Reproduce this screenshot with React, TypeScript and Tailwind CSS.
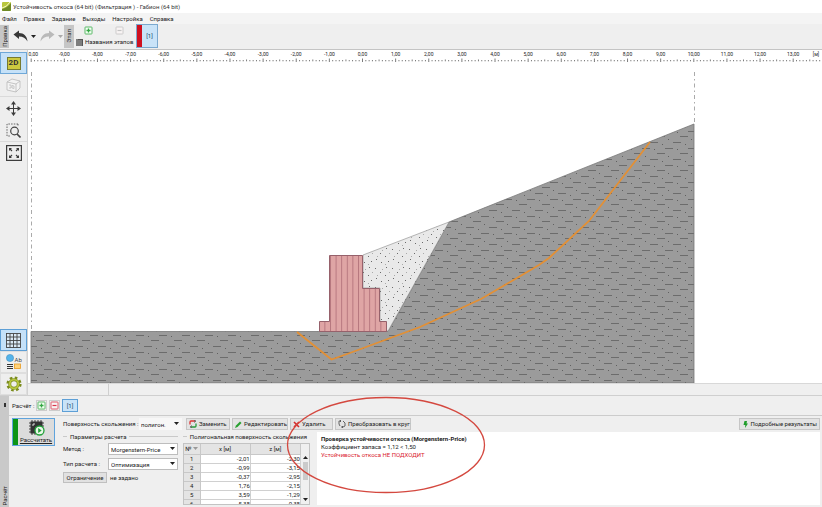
import React, { useState } from "react";

const menus = ["Файл", "Правка", "Задание", "Выходы", "Настройка", "Справка"];

const points = [
  ["1", "-2,01", "-2,30"],
  ["2", "-0,99", "-3,15"],
  ["3", "-0,37", "-2,95"],
  ["4", "1,76", "-2,15"],
  ["5", "3,59", "-1,29"],
  ["6", "5,38", "-0,38"],
];

const METRE = 33.13;
const ORIGIN = 362.5;

function Plus({ color = "#35a845" }: { color?: string }) {
  return (
    <svg className="size-[9px]" viewBox="0 0 9 9" fill="none" stroke={color}>
      <rect x="1" y="1" width="7" height="7" rx="0.6" strokeWidth="0.8" fill="#f4fff4" />
      <path d="M4.5 2.5v4M2.5 4.5h4" strokeWidth="1.3" />
    </svg>
  );
}

function Minus({ color }: { color: string }) {
  return (
    <svg className="size-[9px]" viewBox="0 0 9 9" fill="none" stroke={color}>
      <rect x="1" y="1" width="7" height="7" rx="0.6" strokeWidth="0.8" fill="#f8f4f4" />
      <path d="M2.5 4.5h4" strokeWidth="1.2" />
    </svg>
  );
}

function Arrow({ color, flip }: { color: string; flip?: boolean }) {
  return (
    <svg className={flip ? "h-[12px] w-[15px] -scale-x-100" : "h-[12px] w-[15px]"} viewBox="0 0 15 12">
      <path d="M0.5 4.5 6 0.5V3c5 0 8 3 8.500 8.500C12.500 8 10 6.500 6 6.500V9Z" fill={color} />
    </svg>
  );
}

function Caret({ color = "#222" }: { color?: string }) {
  return (
    <svg className="h-[3px] w-[5px]" viewBox="0 0 5 3">
      <path d="M0 0h5L2.500 3Z" fill={color} />
    </svg>
  );
}

function TitleBar() {
  return (
    <header className="flex h-[13px] shrink-0 items-center gap-[2px] bg-white pl-[2px]">
      <svg className="size-[9px]" viewBox="0 0 9 9">
        <rect width="9" height="9" rx="1" fill="#b9c63c" />
        <path d="M0 7Q5 6 9 1v7q0 1-1 1H1Q0 9 0 8Z" fill="#6f8a25" />
        <path d="M0 6Q5 5 8 0" stroke="#f3f6c8" fill="none" />
      </svg>
      <h1 className="text-[#333]">Устойчивость откоса (64 bit) (Фильтрация ) - Габион (64 bit)</h1>
    </header>
  );
}

function Toolbar() {
  return (
    <div className="flex h-[26px] shrink-0 items-center border-b border-[#c4c4c4] pb-px">
      <div className="flex h-[23px] w-[9px] items-center justify-center bg-[#c6c6c6]">
        <span className="rotate-180 [writing-mode:vertical-rl]">Правка</span>
      </div>
      <button aria-label="Отменить" className="ml-[4px] flex items-center gap-[3px]">
        <Arrow color="#383838" />
        <Caret />
      </button>
      <button aria-label="Вернуть" className="ml-[4px] flex items-center gap-[3px]">
        <Arrow color="#b9b9b9" flip />
        <Caret color="#aaa" />
      </button>
      <div className="ml-[1px] flex h-[23px] w-[10px] items-center justify-center bg-[#c6c6c6]">
        <span className="rotate-180 [writing-mode:vertical-rl]">Этап</span>
      </div>
      <div className="flex w-[62px] flex-col gap-[3px] pl-[2px]">
        <div className="flex gap-[22px] pl-[8px]">
          <button aria-label="Добавить этап"><Plus /></button>
          <button aria-label="Удалить этап"><Minus color="#c3c3c3" /></button>
        </div>
        <button className="flex items-center gap-[2px] whitespace-nowrap">
          <svg className="size-[7px]" viewBox="0 0 7 7">
            <rect width="7" height="7" fill="#555" />
            <path d="M2 2h4M2 4h4M2 6h4M1 0v7" stroke="#ddd" strokeWidth="0.6" />
          </svg>
          Названия этапов
        </button>
      </div>
      <button className="flex h-[24px] w-[22px] border border-[#7ba9cf] bg-[#c9e3f8]">
        <span className="h-full w-[5px] bg-[#cf1020]" />
        <span className="flex h-full flex-1 items-center justify-center text-[#246]">[1]</span>
      </button>
    </div>
  );
}

const toolBase = "flex h-[22px] w-[27px] items-center justify-center";

function Sidebar() {
  return (
    <nav className="flex w-[28px] shrink-0 flex-col justify-between border-r border-[#d2d2d2] bg-[#eeeeee]">
      <div className="flex flex-col pt-[2px]">
        <button className={`${toolBase} border border-[#6fa8d8] bg-[#c5e1f8]`}>
          <span className="flex h-[13px] w-[14px] items-center justify-center border border-[#777a30] bg-[#cdc93f] text-[8px] leading-[8px] font-bold text-[#333]">2D</span>
        </button>
        <button aria-label="3D" className={toolBase}>
          <svg className="size-[15px]" viewBox="0 0 15 15" fill="#f3f3f3" stroke="#b9b9b9" strokeWidth="0.8">
            <path d="M1 4 6 1l8 2v7l-4 4-9-2Z" />
            <path d="M1 4l9 2 4-3M10 6v8" />
            <path d="M3 7h2v3H3M6 7.500l2 .5v2.500l-2-.5Z" fill="none" strokeWidth="0.7" />
          </svg>
        </button>
        <div className="flex flex-col border-y border-[#dadada]">
          <button aria-label="Переместить" className={toolBase}>
            <svg className="size-[15px]" viewBox="0 0 15 15" fill="#3c3c3c">
              <path d="M7 3h1v9H7zM3 7h9v1H3z" />
              <path d="M7.500 0 10 3.500H5ZM7.500 15 5 11.500h5ZM0 7.500 3.500 5v5ZM15 7.500 11.500 10V5Z" />
            </svg>
          </button>
          <button aria-label="Увеличить область" className={toolBase}>
            <svg className="size-[15px]" viewBox="0 0 15 15" fill="none" stroke="#444">
              <path d="M12 1H1v12h3M12 1v2" strokeDasharray="1.500 1.200" strokeWidth="0.8" />
              <circle cx="8.500" cy="8" r="3.800" strokeWidth="1.200" />
              <path d="m11 11 3.500 3.500" strokeWidth="1.600" />
            </svg>
          </button>
        </div>
        <button aria-label="Показать всё" className={toolBase}>
          <svg className="size-[16px]" viewBox="0 0 16 16" fill="none" stroke="#3c3c3c">
            <rect x="0.600" y="0.600" width="14.800" height="14.800" strokeWidth="1.200" />
            <path d="m3.500 3.500 2.500 2.500M12.500 3.500 10 6M12.500 12.500 10 10M3.500 12.500 6 10" strokeWidth="1.100" />
            <path d="M3 3h3L3 6ZM13 3v3l-3-3ZM13 13h-3l3-3ZM3 13v-3l3 3Z" fill="#3c3c3c" stroke="none" />
          </svg>
        </button>
      </div>
      <div className="flex flex-col">
        <button aria-label="Таблица" className={`${toolBase} border border-[#5d9fd6] bg-[#c5e1f8]`}>
          <svg className="size-[15px]" viewBox="0 0 15 15" fill="#dbe9f4" stroke="#444" strokeWidth="0.900">
            <rect x="0.500" y="0.500" width="14" height="14" />
            <path d="M.5 4h14M.5 7.500h14M.5 11h14M4 .5v14M7.500.5v14M11 .5v14" />
          </svg>
        </button>
        <button aria-label="Подписи" className={`${toolBase} border border-[#dedede]`}>
          <svg className="size-[16px]" viewBox="0 0 16 16">
            <circle cx="4" cy="4" r="3.600" fill="#55b4ea" stroke="#3a87b8" strokeWidth="0.500" />
            <text x="8.500" y="7.500" fontSize="6" fill="#444">Ab</text>
            <path d="M1 10.500h6M1 12.500h6M1 14.500h6" stroke="#333" />
            <rect x="8.500" y="10" width="6" height="4.500" fill="#ffd27a" stroke="#e89b20" strokeWidth="0.800" />
          </svg>
        </button>
        <button aria-label="Параметры" className={`${toolBase} border border-[#dedede]`}>
          <svg className="size-[16px]" viewBox="0 0 16 16" fill="none">
            <circle cx="8" cy="8" r="6.400" stroke="#7b8c1d" strokeWidth="2.400" strokeDasharray="2.600 2.427" />
            <circle cx="8" cy="8" r="4.300" stroke="#7b8c1d" strokeWidth="3" />
            <circle cx="8" cy="8" r="4.300" stroke="#b8c840" strokeWidth="1.800" />
          </svg>
        </button>
      </div>
    </nav>
  );
}

function Ruler() {
  const ticks = Array.from({ length: 600 }, (_, i) => i - 100);
  return (
    <g>
      {ticks.map((t) => {
        const major = t % 10 === 0;
        const half = t % 5 === 0;
        const x = ORIGIN + (t * METRE) / 10;
        return <line key={t} x1={x} x2={x} y1={major ? 58.500 : half ? 59.500 : 60} y2={major ? 62 : 61.300} stroke="#444" strokeWidth="0.700" />;
      })}
      {ticks
        .filter((t) => t % 10 === 0 && t <= 130)
        .map((t) => (
          <text key={t} x={ORIGIN + (t * METRE) / 10} y="56" fontSize="5" fill="#222" textAnchor="middle">
            {(t / 10).toFixed(2).replace(".", ",")}
          </text>
        ))}
      <text x="816" y="56" fontSize="5" fill="#222" textAnchor="middle">[м]</text>
    </g>
  );
}

function Model() {
  return (
    <svg className="block h-full min-h-[333px] w-full" role="img" aria-label="Расчётная схема откоса">
      <defs>
        <pattern id="clay" x="604" y="311" width="23" height="17" patternUnits="userSpaceOnUse">
          <rect width="23" height="17" fill="#9b9b9b" />
          <path d="M0 1.500h8M15 7.500h8M7 12.500h8" stroke="#606060" strokeWidth="0.800" />
          <path d="M12 3.500h1M18 15.500h1M4 8.500h1" stroke="#606060" />
        </pattern>
        <pattern id="sand" width="17" height="19" patternUnits="userSpaceOnUse">
          <rect width="17" height="19" fill="#e9e9e9" />
          <path d="M1 2.500h1M12 1.500h1M6 6.500h1M11 9.500h1M2 12.500h1M7 15.500h1M14 14.500h1" stroke="#6a6a6a" />
          <path d="M8 3.500h1M15 6.500h1M3 9.500h1M11 17.500h1" stroke="#aaa" />
        </pattern>
        <pattern id="gabion" x="330" width="5.600" height="20" patternUnits="userSpaceOnUse">
          <rect width="5.600" height="20" fill="#dfa5a5" />
          <path d="M.5 0v20" stroke="#b07078" strokeWidth="0.900" />
        </pattern>
      </defs>
      <g transform="translate(-28 -50)">
        <Ruler />
        <path d="M31.500 72V331M694.500 72V124" stroke="#aaa" strokeDasharray="4 3 1.500 3" />
        <path d="M31 331.500H388L449 222 694 124V383H31Z" fill="url(#clay)" stroke="#777" strokeWidth="0.800" />
        <path d="M363 255 449 222 388 331H380V288H363Z" fill="url(#sand)" stroke="#888" strokeWidth="0.600" />
        <path d="M329.500 255.500h33v33h17v33h7v10h-67v-10h10Z" fill="url(#gabion)" stroke="#96616b" />
        <path d="m297 332 34.500 27.500 17-6L420 327l61-28 58-34 10-7 40-37 61-79" fill="none" stroke="#e39035" strokeWidth="1.800" />
      </g>
    </svg>
  );
}

const actionCls = "flex h-[12px] items-center gap-[2px] border border-[#c6c6c6] bg-[#e3e3e3] px-[2px] whitespace-nowrap";

function Select({ id, options, plain }: { id: string; options: string[]; plain?: boolean }) {
  return (
    <div className="relative min-w-0 flex-1">
      <select
        id={id}
        className={`block h-[12px] w-full appearance-none pl-[2px] leading-[9px] outline-none ${plain ? "bg-[#f7f7f7]" : "border border-[#bdbdbd] bg-white"}`}
      >
        {options.map((o) => (
          <option key={o}>{o}</option>
        ))}
      </select>
      <span className="pointer-events-none absolute top-[4px] right-[3px] flex">
        <Caret />
      </span>
    </div>
  );
}

function Legend({ children }: { children: React.ReactNode }) {
  return (
    <div className="flex h-[9px] items-center gap-[3px] whitespace-nowrap">
      <span className="h-px w-[4px] bg-[#c9c9c9]" />
      <span>{children}</span>
      <span className="h-px flex-1 bg-[#c9c9c9]" />
    </div>
  );
}

function Params() {
  return (
    <section className="flex w-[115px] shrink-0 flex-col">
      <Legend>Параметры расчета</Legend>
      <div className="mt-[2px] flex items-center">
        <label htmlFor="method" className="w-[45px]">Метод :</label>
        <Select id="method" options={["Morgenstern-Price", "Bishop", "Spencer"]} />
      </div>
      <div className="mt-[3px] flex items-center">
        <label htmlFor="kind" className="w-[45px]">Тип расчета :</label>
        <Select id="kind" options={["Оптимизация", "Стандартный"]} />
      </div>
      <div className="mt-[2px] flex items-center gap-[3px]">
        <button className="flex h-[11px] w-[44px] items-center justify-center border border-[#c0c0c0] bg-[#e1e1e1]">Ограничение</button>
        <span>не задано</span>
      </div>
    </section>
  );
}

function Surface() {
  return (
    <section className="flex w-[127px] shrink-0 flex-col">
      <Legend>Полигональная поверхность скольжения</Legend>
      <div className="mt-[2px] flex h-[62px] overflow-hidden border border-[#c3c3c3] bg-white">
        <table className="h-max flex-1 table-fixed border-collapse">
          <thead>
            <tr className="h-[10px] bg-[#e4e4e4]">
              <th className="w-[16px] border-r border-b border-[#c8c8c8] p-0 font-normal">
                <span className="flex items-center justify-center gap-[2px]">№ <Caret color="#999" /></span>
              </th>
              <th className="border-r border-b border-[#c8c8c8] p-0 font-normal">x [м]</th>
              <th className="border-r border-b border-[#c8c8c8] p-0 font-normal">z [м]</th>
            </tr>
          </thead>
          <tbody className="leading-[8px]">
            {points.map(([n, x, z]) => (
              <tr key={n} className="h-[9px]">
                <td className="border-r border-b border-[#c8c8c8] bg-[#e4e4e4] p-0 text-center">{n}</td>
                <td className="border-r border-b border-[#d0d0d0] p-0 text-right">{x}</td>
                <td className="border-r border-b border-[#d0d0d0] p-0 text-right">{z}</td>
              </tr>
            ))}
          </tbody>
        </table>
        <div className="flex w-[8px] flex-col items-center bg-[#f0f0f0] pt-[12px] pb-[3px]">
          <span className="flex rotate-180"><Caret /></span>
          <span className="mt-[3px] h-[18px] w-[5px] bg-[#cbcbcb]" />
          <span className="mt-auto flex"><Caret /></span>
        </div>
      </div>
    </section>
  );
}

function Actions() {
  return (
    <div className="flex items-center justify-between">
      <div className="flex items-center gap-[2px]">
        <div className="mr-[2px] flex w-[119px] items-center gap-[2px] whitespace-nowrap">
          <label htmlFor="surface" className="w-[74px]">Поверхность скольжения :</label>
          <Select id="surface" options={["полигон.", "круговая"]} plain />
        </div>
        <button className={`${actionCls} w-[44px]`}>
          <svg className="size-[8px] shrink-0" viewBox="0 0 8 8" fill="none" strokeWidth="1.300">
            <path d="M1 4.500V2q0-1 1-1h4" stroke="#d33" />
            <path d="M7 3.500V6q0 1-1 1H2" stroke="#2a9a3a" />
            <path d="M5 0l2 1-2 1.500M3 8 1 7l2-1.500" stroke="#555" strokeWidth="0.800" />
          </svg>
          Заменить
        </button>
        <button className={`${actionCls} w-[56px]`}>
          <svg className="size-[7px] shrink-0" viewBox="0 0 7 7">
            <path d="M0 7 1 4.500 5 .5 6.500 2 2.500 6Z" fill="#27a02f" />
          </svg>
          Редактировать
        </button>
        <button className={`${actionCls} w-[43px]`}>
          <svg className="size-[7px] shrink-0" viewBox="0 0 7 7" stroke="#d52a2a" strokeWidth="1.600">
            <path d="m1 1 5 5M6 1 1 6" />
          </svg>
          Удалить
        </button>
        <button className={`${actionCls} w-[76px]`}>
          <svg className="size-[8px] shrink-0" viewBox="0 0 8 8" fill="none" stroke="#555" strokeWidth="0.900">
            <path d="M3 1H1v3l1 2M5 1l2 2v3L5 7H3M2 0l1 1-1 1M5 6 4 7l1 1" />
          </svg>
          Преобразовать в круг
        </button>
      </div>
      <button className={actionCls}>
        <svg className="h-[7px] w-[7px]" viewBox="0 0 7 7">
          <path d="M2.500 0h2.500L4.500 2.500H6L3 7l.3-3H1.500Z" fill="#1f9d2b" />
        </svg>
        Подробные результаты
      </button>
    </div>
  );
}

function Analysis() {
  return (
    <div className="relative flex h-[112px] shrink-0 border-t border-[#cfcfcf]">
      <div className="flex w-[9px] shrink-0 flex-col items-center justify-between bg-[#c9c9c9] pt-[7px] pb-[2px]">
        <span className="h-[4px] w-[2px] bg-[#333]" />
        <span className="rotate-180 [writing-mode:vertical-rl]">Расчёт</span>
      </div>
      <div className="flex min-w-0 flex-1 flex-col">
        <div className="flex h-[20px] items-center gap-[2px] border-b border-[#cccccc] pl-[3px]">
          <span className="w-[22px] whitespace-nowrap">Расчёт :</span>
          <button aria-label="Добавить расчёт" className="flex size-[11px] items-center justify-center border border-[#cccccc]"><Plus /></button>
          <button aria-label="Удалить расчёт" className="flex size-[11px] items-center justify-center border border-[#cccccc]"><Minus color="#d9364a" /></button>
          <button className="flex h-[13px] w-[16px] items-center justify-center border border-[#5d9fd6] bg-[#c9e3f8] text-[#246]">[1]</button>
        </div>
        <div className="flex min-h-0 flex-1 pt-[2px] pr-[2px] pl-[3px]">
          <button className="flex h-[28px] w-[43px] shrink-0 border border-[#5fa3dc] bg-[#dcdcdc]">
            <span className="h-full w-[5px] bg-[#0a9416]" />
            <span className="flex flex-1 flex-col items-center">
              <svg className="h-[17px] w-[17px]" viewBox="0 0 17 17">
                <path d="M4 1v15M7 1v15M10 1v15M13 1v15M1 4h15M1 7h15M1 10h15M1 13h15" stroke="#444" />
                <rect x="2.500" y="2.500" width="12" height="12" fill="#333" />
                <path d="M5 7V5h2" stroke="#ddd" fill="none" />
                <circle cx="11.500" cy="11.500" r="4.500" fill="#e9f8e9" stroke="#23a23a" strokeWidth="1.300" />
                <path d="m10.200 9 3.500 2.500-3.500 2.500Z" fill="#23a23a" />
              </svg>
              <span className="leading-[8px] underline decoration-[0.5px]">Рассчитать</span>
            </span>
          </button>
          <div className="flex min-w-0 flex-1 flex-col gap-[2px] pl-[8px]">
            <Actions />
            <div className="flex min-h-0 flex-1">
              <Params />
              <span className="w-[5px] shrink-0" />
              <Surface />
              <section className="ml-[7px] flex-1 bg-white px-[4px] pt-[3px]">
                <h2 className="font-bold">Проверка устойчивости откоса (Morgenstern-Price)</h2>
                <p>Коэффициент запаса = 1,12 &lt; 1,50</p>
                <p className="text-[#d9232e]">Устойчивость откоса НЕ ПОДХОДИТ</p>
              </section>
            </div>
          </div>
        </div>
        <div className="h-[2px]" />
      </div>
      <svg className="pointer-events-none absolute top-0 left-[286px] h-[98px] w-[202px]" viewBox="0 0 202 98">
        <ellipse cx="100" cy="49" rx="98.500" ry="47.500" fill="none" stroke="#d4483f" strokeWidth="1.300" />
      </svg>
    </div>
  );
}

export default function App() {
  const [menu, setMenu] = useState("");
  return (
    <div className="flex min-h-screen flex-col bg-[#efefef] font-[Roboto,'Noto_Sans',sans-serif] text-[6px] leading-[8px] text-[#222]">
      <TitleBar />
      <nav className="flex h-[11px] shrink-0 items-center gap-[7px] bg-[#f4f4f4] pl-[2px]">
        {menus.map((m) => (
          <button key={m} aria-pressed={menu === m} onClick={() => setMenu(m)}>{m}</button>
        ))}
      </nav>
      <Toolbar />
      <div className="flex flex-1">
        <Sidebar />
        <main className="flex min-w-0 flex-1 flex-col">
          <div className="flex-1 overflow-hidden bg-white">
            <Model />
          </div>
          <div className="flex h-[12px] shrink-0 border-t border-[#d8d8d8]">
            <span className="w-[81px] border-r border-[#cfcfcf]" />
          </div>
        </main>
      </div>
      <Analysis />
    </div>
  );
}
